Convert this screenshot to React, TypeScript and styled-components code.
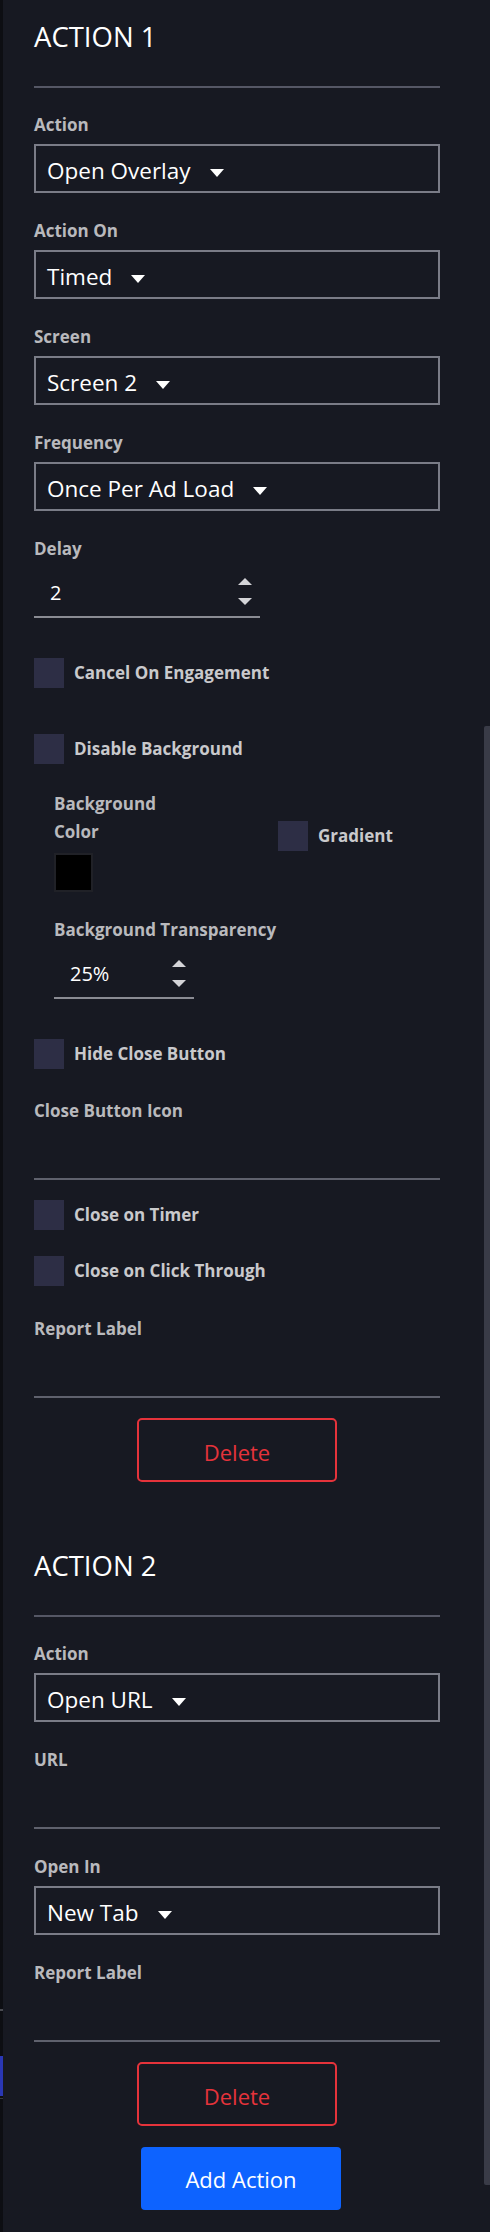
import React from 'react'
import styled, { createGlobalStyle } from 'styled-components'

const GlobalStyle = createGlobalStyle`
  html, body {
    margin: 0;
    padding: 0;
    background: #171922;
  }
  body {
    font-family: "Open Sans", "Noto Sans", sans-serif;
    color: #ffffff;
  }
`

const Screen = styled.div`
  display: flex;
  width: 490px;
  height: 2232px;
  background: #171922;
  overflow: hidden;
`

const LeftEdge = styled.div`
  width: 3px;
  flex-shrink: 0;
  background: #0d0e13;
  display: flex;
  flex-direction: column;
`

const EdgeMark = styled.div<{ $top: number; $height: number; $color: string }>`
  margin-top: ${p => p.$top}px;
  height: ${p => p.$height}px;
  background: ${p => p.$color};
`

const Panel = styled.div`
  flex: 1;
  padding: 21px 44px 0 31px;
`

const ScrollRail = styled.div`
  width: 6px;
  flex-shrink: 0;
  display: flex;
  flex-direction: column;
`

const ScrollThumb = styled.div`
  margin-top: 726px;
  height: 1459px;
  background: #393b47;
  border-radius: 2px 0 0 2px;
`

const ActionBlock = styled.section<{ $top?: number }>`
  display: flex;
  flex-direction: column;
  margin-top: ${p => p.$top || 0}px;
`

const Heading = styled.h2`
  margin: 0;
  font-size: 27.5px;
  font-weight: 400;
  line-height: 32px;
  color: #ffffff;
`

const Divider = styled.hr`
  margin: 33px 0 23.5px;
  border: 0;
  height: 2px;
  background: #555765;
`

const Field = styled.div<{ $mb?: number; $indent?: number }>`
  display: flex;
  flex-direction: column;
  margin-bottom: ${p => (p.$mb === undefined ? 25 : p.$mb)}px;
  padding-left: ${p => p.$indent || 0}px;
`

const Label = styled.label<{ $lh?: number; $width?: number }>`
  font-size: 17px;
  font-weight: 700;
  line-height: ${p => p.$lh || 24}px;
  padding-top: 1px;
  color: #b9b9bd;
  margin-bottom: 7px;
  ${p => (p.$width ? `max-width: ${p.$width}px;` : '')}
`

const SelectBox = styled.div`
  box-sizing: border-box;
  height: 49px;
  border: 2px solid #7a7c87;
  padding: 5px 0 0 11px;
  display: flex;
  align-items: center;
  font-size: 22.5px;
  line-height: 40px;
  color: #ffffff;
`

const Caret = styled.span`
  width: 0;
  height: 0;
  margin: 4px 0 0 19px;
  border-left: 7.5px solid transparent;
  border-right: 7.5px solid transparent;
  border-top: 8px solid #ffffff;
`

const TextLine = styled.div`
  box-sizing: border-box;
  height: 50px;
  border-bottom: 2px solid #5f616d;
`

const NumberBox = styled.div<{ $width: number }>`
  box-sizing: border-box;
  width: ${p => p.$width}px;
  height: 50px;
  border-bottom: 2px solid #8a8b93;
  display: flex;
  justify-content: space-between;
  padding: 0 8px 0 16px;
`

const NumberValue = styled.span`
  align-self: flex-end;
  padding-bottom: 11px;
  font-size: 20px;
  line-height: 24px;
  color: #ffffff;
`

const Spinner = styled.div`
  align-self: center;
  display: flex;
  flex-direction: column;
  gap: 13px;
`

const Arrow = styled.span<{ $up?: boolean }>`
  width: 0;
  height: 0;
  border-left: 7.5px solid transparent;
  border-right: 7.5px solid transparent;
  ${p => (p.$up ? 'border-bottom: 7.5px solid #d4d4d8;' : 'border-top: 7.5px solid #d4d4d8;')}
`

const CheckRow = styled.div<{ $mb?: number }>`
  display: flex;
  align-items: center;
  gap: 10px;
  margin-bottom: ${p => (p.$mb === undefined ? 25 : p.$mb)}px;
`

const CheckBox = styled.span`
  width: 30px;
  height: 30px;
  flex-shrink: 0;
  background: #2d2e45;
`

const CheckLabel = styled.span`
  font-size: 17px;
  font-weight: 700;
  line-height: 24px;
  color: #c9c9cc;
`

const ColorGroup = styled.div`
  display: grid;
  grid-template-columns: 224px 1fr;
  align-items: center;
  padding-left: 20px;
  margin-bottom: 25px;
`

const Swatch = styled.div`
  box-sizing: border-box;
  width: 39px;
  height: 39px;
  background: #000000;
  border: 2px solid #202127;
`

const ButtonRow = styled.div<{ $mt: number; $shift?: number }>`
  display: flex;
  justify-content: center;
  margin-top: ${p => p.$mt}px;
  padding-left: ${p => (p.$shift || 0) * 2}px;
`

const DeleteButton = styled.button`
  box-sizing: border-box;
  width: 200px;
  height: 64px;
  padding: 4px 0 0;
  border: 2px solid #e5333b;
  border-radius: 5px;
  background: transparent;
  color: #e5333b;
  font-family: "Open Sans", "Noto Sans", sans-serif;
  font-size: 22px;
`

const AddButton = styled.button`
  box-sizing: border-box;
  width: 200px;
  height: 63px;
  padding: 2px 0 0;
  border: 0;
  border-radius: 4px;
  background: #0d63ff;
  color: #ffffff;
  font-family: "Open Sans", "Noto Sans", sans-serif;
  font-size: 22px;
`

function Select({ value }: { value: string }) {
  return (
    <SelectBox>
      <span>{value}</span>
      <Caret />
    </SelectBox>
  )
}

function NumberInput({ value, width }: { value: string; width: number }) {
  return (
    <NumberBox $width={width}>
      <NumberValue>{value}</NumberValue>
      <Spinner>
        <Arrow $up />
        <Arrow />
      </Spinner>
    </NumberBox>
  )
}

function Check({ label, mb }: { label: string; mb?: number }) {
  return (
    <CheckRow $mb={mb}>
      <CheckBox />
      <CheckLabel>{label}</CheckLabel>
    </CheckRow>
  )
}

export default function App() {
  return (
    <>
      <GlobalStyle />
      <Screen>
        <LeftEdge>
          <EdgeMark $top={2009} $height={2} $color="#4a4b52" />
          <EdgeMark $top={45} $height={40} $color="#2a37b4" />
          <EdgeMark $top={2} $height={1} $color="#3a3b42" />
        </LeftEdge>
        <Panel>
          <ActionBlock>
            <Heading>ACTION 1</Heading>
            <Divider />
            <Field>
              <Label>Action</Label>
              <Select value="Open Overlay" />
            </Field>
            <Field>
              <Label>Action On</Label>
              <Select value="Timed" />
            </Field>
            <Field>
              <Label>Screen</Label>
              <Select value="Screen 2" />
            </Field>
            <Field>
              <Label>Frequency</Label>
              <Select value="Once Per Ad Load" />
            </Field>
            <Field $mb={40}>
              <Label>Delay</Label>
              <NumberInput value="2" width={226} />
            </Field>
            <Check label="Cancel On Engagement" mb={46} />
            <Check label="Disable Background" mb={25.5} />
            <ColorGroup>
              <Field $mb={0}>
                <Label $lh={28} $width={110}>Background Color</Label>
                <Swatch />
              </Field>
              <CheckRow $mb={10}>
                <CheckBox />
                <CheckLabel>Gradient</CheckLabel>
              </CheckRow>
            </ColorGroup>
            <Field $indent={20} $mb={39.5}>
              <Label>Background Transparency</Label>
              <NumberInput value="25%" width={140} />
            </Field>
            <Check label="Hide Close Button" mb={29.5} />
            <Field $mb={20}>
              <Label>Close Button Icon</Label>
              <TextLine />
            </Field>
            <Check label="Close on Timer" mb={26} />
            <Check label="Close on Click Through" mb={30} />
            <Field $mb={0}>
              <Label>Report Label</Label>
              <TextLine />
            </Field>
            <ButtonRow $mt={19.5}>
              <DeleteButton>Delete</DeleteButton>
            </ButtonRow>
          </ActionBlock>

          <ActionBlock $top={68.5}>
            <Heading>ACTION 2</Heading>
            <Divider />
            <Field>
              <Label>Action</Label>
              <Select value="Open URL" />
            </Field>
            <Field>
              <Label>URL</Label>
              <TextLine />
            </Field>
            <Field>
              <Label>Open In</Label>
              <Select value="New Tab" />
            </Field>
            <Field $mb={0}>
              <Label>Report Label</Label>
              <TextLine />
            </Field>
            <ButtonRow $mt={20}>
              <DeleteButton>Delete</DeleteButton>
            </ButtonRow>
            <ButtonRow $mt={21} $shift={4}>
              <AddButton>Add Action</AddButton>
            </ButtonRow>
          </ActionBlock>
        </Panel>
        <ScrollRail>
          <ScrollThumb />
        </ScrollRail>
      </Screen>
    </>
  )
}
